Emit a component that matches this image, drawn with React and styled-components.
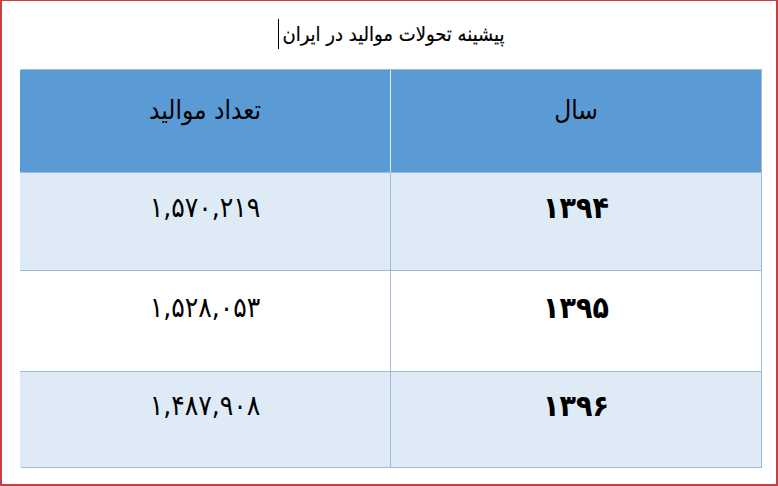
import React from "react";
import styled, { createGlobalStyle } from "styled-components";

const Global = createGlobalStyle`
  html, body { margin: 0; padding: 0; background: #ffffff; }
  body { font-family: "DejaVu Sans", "Noto Sans", sans-serif; }
`;

const Frame = styled.div`
  box-sizing: border-box;
  width: 778px;
  height: 486px;
  border: 2px solid #c4413f;
  border-top-width: 1px;
  padding: 0 14px 0 19px;
  display: flex;
  flex-direction: column;
  background: #ffffff;
`;

const TitleBar = styled.div`
  height: 68px;
  display: flex;
  align-items: center;
  justify-content: center;
  direction: rtl;
`;

const Title = styled.h1`
  margin: 0;
  font-family: "DejaVu Sans Condensed", "DejaVu Sans", sans-serif;
  font-size: 20px;
  font-weight: 400;
  color: #000000;
  display: flex;
  align-items: center;
  gap: 3px;
  margin-bottom: 2px;
  -webkit-text-stroke: 0.2px #000;
`;

const Caret = styled.span`
  display: inline-block;
  width: 1px;
  height: 30px;
  background: #000000;
`;

const Table = styled.div`
  direction: rtl;
  display: grid;
  grid-template-columns: 371px 370px;
  grid-template-rows: 102px 98px 101px 96px;
  border: 1px solid #9fbcd6;
  box-sizing: border-box;
  width: 741px;
`;

const Cell = styled.div`
  display: flex;
  align-items: center;
  justify-content: center;
  padding-bottom: ${(p) => (p.$head ? "22px" : "28px")};
  box-sizing: border-box;
  background: ${(p) => (p.$head ? "#5b9bd5" : p.$alt ? "#deebf7" : "#ffffff")};
  border-left: ${(p) => (p.$first ? (p.$head ? "1px solid #dce9f6" : "1px solid #9fbcd6") : "none")};
  border-top: ${(p) => (p.$head ? "none" : "1px solid #9fbcd6")};
  font-family: "DejaVu Sans Condensed", "DejaVu Sans", sans-serif;
  font-size: ${(p) => (p.$head ? "26px" : p.$bold ? "30px" : "28px")};
  font-weight: ${(p) => (p.$bold ? 700 : 400)};
  color: #000000;
`;

const Num = styled.span`
  direction: ltr;
  unicode-bidi: isolate;
`;

const rows = [
  { year: "۱۳۹۴", count: "۱,۵۷۰,۲۱۹", alt: true },
  { year: "۱۳۹۵", count: "۱,۵۲۸,۰۵۳", alt: false },
  { year: "۱۳۹۶", count: "۱,۴۸۷,۹۰۸", alt: true },
];

export default function App() {
  return (
    <>
      <Global />
      <Frame>
        <TitleBar>
          <Title>
            <span>پیشینه تحولات موالید در ایران</span>
            <Caret />
          </Title>
        </TitleBar>
        <Table>
          <Cell $head $first>سال</Cell>
          <Cell $head>تعداد موالید</Cell>
          {rows.map((r) => (
            <React.Fragment key={r.year}>
              <Cell $first $alt={r.alt} $bold>
                <Num>{r.year}</Num>
              </Cell>
              <Cell $alt={r.alt}>
                <Num>{r.count}</Num>
              </Cell>
            </React.Fragment>
          ))}
        </Table>
      </Frame>
    </>
  );
}
